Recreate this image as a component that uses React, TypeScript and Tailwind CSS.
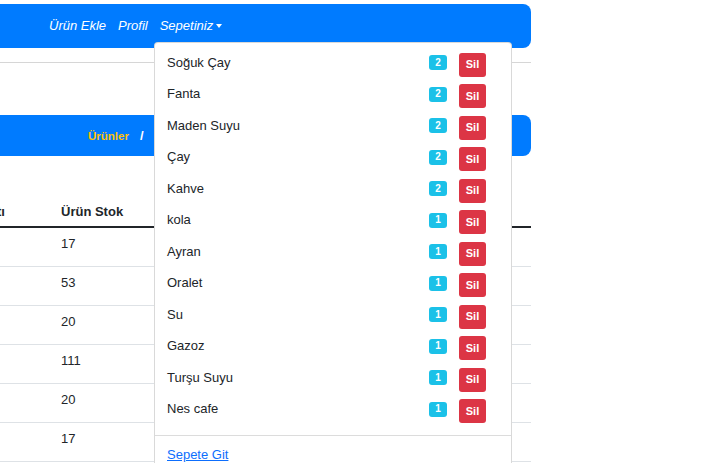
import React from "react";

const items: { name: string; qty: number }[] = [
  { name: "Soğuk Çay", qty: 2 },
  { name: "Fanta", qty: 2 },
  { name: "Maden Suyu", qty: 2 },
  { name: "Çay", qty: 2 },
  { name: "Kahve", qty: 2 },
  { name: "kola", qty: 1 },
  { name: "Ayran", qty: 1 },
  { name: "Oralet", qty: 1 },
  { name: "Su", qty: 1 },
  { name: "Gazoz", qty: 1 },
  { name: "Turşu Suyu", qty: 1 },
  { name: "Nes cafe", qty: 1 },
];

const stocks: string[] = ["17", "53", "20", "111", "20", "17", "40"];

export default function App() {
  return (
    <div className="relative w-[706px] h-[463px] overflow-hidden bg-white font-['Liberation_Sans',Arial,sans-serif] text-[#212529]">
      <div className="w-[531px] pt-[4px]">
        <nav className="h-[44px] bg-[#007bff] rounded-r-[8px] flex items-center pl-[49px] gap-[12px] text-[13px] italic text-white leading-[20px]">
          <span>Ürün Ekle</span>
          <span>Profil</span>
          <span className="flex items-center">
            Sepetiniz
            <span className="ml-[3px] w-0 h-0 border-x-[3.5px] border-x-transparent border-t-[4px] border-t-white" />
          </span>
        </nav>

        <div className="mt-[14px] h-px bg-[#d6d6d6]" />

        <div className="mt-[52px] h-[41px] bg-[#007bff] rounded-r-[8px] flex items-center pl-[88px] leading-[20px]">
          <span className="text-[11.5px] font-bold text-[#ffc107]">Ürünler</span>
          <span className="ml-[11px] text-[13px] font-bold text-white">/</span>
        </div>

        <div className="mt-[40px] -ml-[75px] w-[606px] text-[13px] leading-[20px]">
          <div className="flex border-b-2 border-[#212529] pt-[6px] pb-[4px] font-bold">
            <div className="w-[124px] pl-[12px] whitespace-nowrap">Ürün Fiyatı</div>
            <div className="flex-1 pl-[12px] whitespace-nowrap">Ürün Stok</div>
          </div>
          {stocks.map((s, i) => (
            <div key={i} className="flex border-b border-[#dee2e6] pt-[6px] pb-[12px]">
              <div className="w-[124px] pl-[12px] h-[20px]" />
              <div className="flex-1 pl-[12px]">{s}</div>
            </div>
          ))}
        </div>
      </div>

      <div className="absolute left-[154px] top-[42px] w-[358px] h-[440px] bg-white border border-black/15 rounded-[4px] pt-[4px]">
        {items.map((it) => (
          <div key={it.name} className="flex items-center h-[31.5px] pl-[12px] pr-[25px] text-[13px] leading-[20px] text-[#212529]">
            <span className="flex-1">{it.name}</span>
            <span className="w-[18px] h-[15px] rounded-[3px] bg-[#1bc1e8] text-white text-[10px] font-bold flex items-center justify-center leading-none">
              {it.qty}
            </span>
            <span className="ml-[12px] mt-[4px] w-[27px] h-[24px] rounded-[3px] bg-[#dc3545] text-white text-[11px] font-bold flex items-center justify-center leading-none">
              Sil
            </span>
          </div>
        ))}
        <div className="mt-[10px] h-px bg-[#dcdcdc]" />
        <div className="pt-[9px] pl-[12px] text-[13px] leading-[20px]">
          <span className="underline text-[#0d6efd]">Sepete Git</span>
        </div>
      </div>
    </div>
  );
}
